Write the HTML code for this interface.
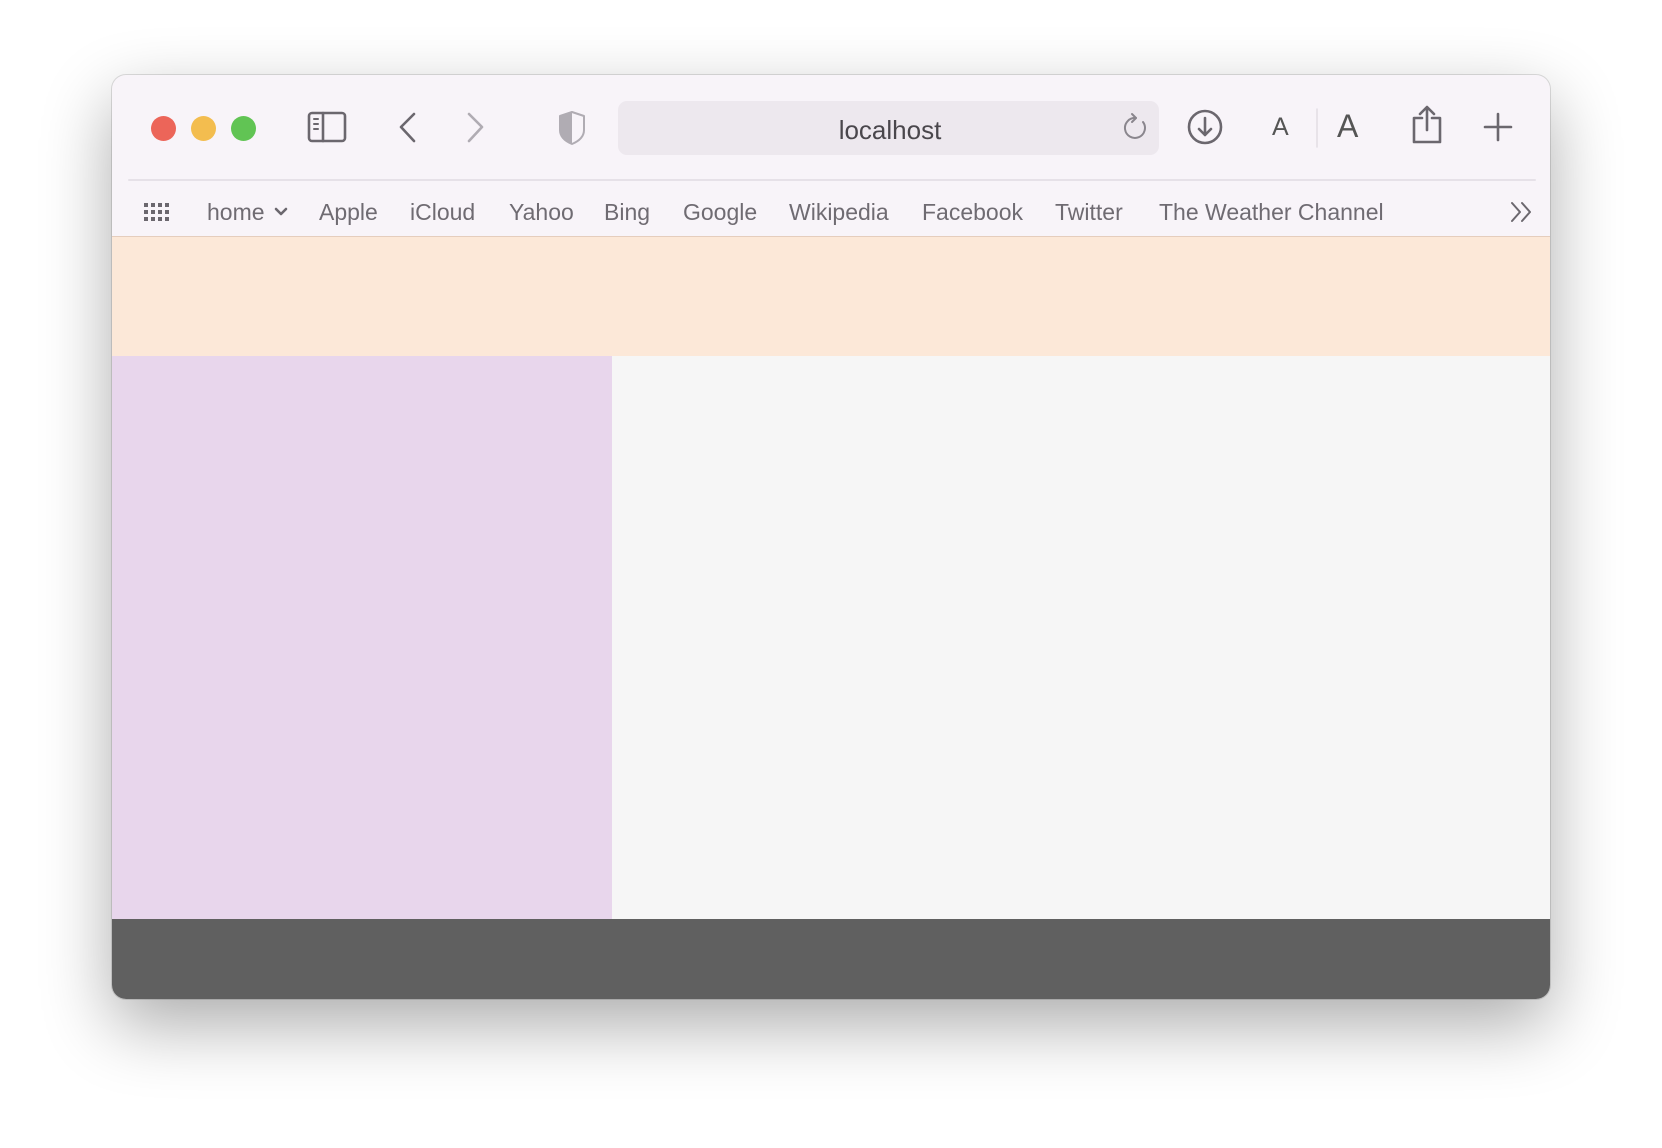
<!DOCTYPE html>
<html><head><style>
*{margin:0;padding:0;box-sizing:border-box}
body{width:1662px;height:1148px;background:#fff;position:relative;overflow:hidden;font-family:"Liberation Sans",sans-serif}
.win{position:absolute;left:112px;top:75px;width:1438px;height:924px;border-radius:14px;overflow:hidden;background:#f8f4f9;box-shadow:0 26px 70px rgba(0,0,0,.33),0 0 0 1px rgba(0,0,0,.12)}
.a{position:absolute}
.dot{position:absolute;top:116px;width:25px;height:25px;border-radius:50%}
.bm{position:absolute;top:199px;font-size:23px;color:#6f6b72;white-space:nowrap}
</style></head><body>
<div class="win"></div>
<div class="a" style="left:618px;top:101px;width:541px;height:54px;border-radius:9px;background:#ede8ee"></div>
<div class="dot" style="left:151px;background:#ec6559"></div>
<div class="dot" style="left:191px;background:#f3bd4f"></div>
<div class="dot" style="left:231px;background:#61c454"></div>
<svg class="a" style="left:0;top:0" width="1662" height="260" fill="none" stroke="#6b676e" stroke-width="2.6" stroke-linecap="round" stroke-linejoin="round">
<rect x="309" y="113" width="36" height="28" rx="3"/><line x1="323" y1="113" x2="323" y2="141"/>
<line x1="314" y1="119" x2="318" y2="119" stroke-width="2"/><line x1="314" y1="124" x2="318" y2="124" stroke-width="2"/><line x1="314" y1="129" x2="318" y2="129" stroke-width="2"/>
<path d="M414 114 L401 127 L414 141"/>
<path d="M469 114 L482 127 L469 141" stroke="#b0acb3"/>
<path d="M572 112 L584 116 L584 130 Q584 139 572 144 Q560 139 560 130 L560 116 Z" stroke="#b0acb3" stroke-width="2"/>
<path d="M572 112 L560 116 L560 130 Q560 139 572 144 Z" fill="#b0acb3" stroke="none"/>
<path d="M1143 122 A10 10 0 1 1 1136 118" stroke="#8a868d" stroke-width="2"/><path d="M1132 114 L1136 118 L1132 122" stroke="#8a868d" stroke-width="2"/>
<circle cx="1205" cy="127" r="16"/><path d="M1205 118 L1205 135 M1199 129 L1205 135 L1211 129"/>
<line x1="1317" y1="109" x2="1317" y2="147" stroke="#e2dde4" stroke-width="1.5"/>
<path d="M1427 108 L1427 130 M1420 114 L1427 107 L1434 114 M1422 118 L1414 118 L1414 142 L1440 142 L1440 118 L1432 118"/>
<path d="M1498 114 L1498 140 M1485 127 L1511 127"/>
<line x1="129" y1="180" x2="1535" y2="180" stroke="#e6e1e8" stroke-width="2"/>
<path d="M1512 203 L1520 212 L1512 221 M1522 203 L1530 212 L1522 221" stroke-width="2"/>
<path d="M276 209 L281 214 L286 209" stroke-width="2.6"/>
<g fill="#6b676e" stroke="none">
<rect x="144" y="203" width="4" height="4"/><rect x="151" y="203" width="4" height="4"/><rect x="158" y="203" width="4" height="4"/><rect x="165" y="203" width="4" height="4"/>
<rect x="144" y="210" width="4" height="4"/><rect x="151" y="210" width="4" height="4"/><rect x="158" y="210" width="4" height="4"/><rect x="165" y="210" width="4" height="4"/>
<rect x="144" y="217" width="4" height="4"/><rect x="151" y="217" width="4" height="4"/><rect x="158" y="217" width="4" height="4"/><rect x="165" y="217" width="4" height="4"/>
</g>
</svg>
<div class="a" style="left:618px;top:115px;width:544px;text-align:center;font-size:26px;color:#4a474c">localhost</div>
<div class="a" style="left:1272px;top:113px;font-size:25px;color:#555">A</div>
<div class="a" style="left:1337px;top:108px;font-size:32px;color:#555">A</div>
<div class="bm" style="left:207px">home</div>
<div class="bm" style="left:319px">Apple</div>
<div class="bm" style="left:410px">iCloud</div>
<div class="bm" style="left:509px">Yahoo</div>
<div class="bm" style="left:604px">Bing</div>
<div class="bm" style="left:683px">Google</div>
<div class="bm" style="left:789px">Wikipedia</div>
<div class="bm" style="left:922px">Facebook</div>
<div class="bm" style="left:1055px">Twitter</div>
<div class="bm" style="left:1159px">The Weather Channel</div>
<div class="a" style="left:112px;top:236px;width:1438px;height:1px;background:#e5cdbd"></div>
<div class="a" style="left:112px;top:237px;width:1438px;height:119px;background:#fce8d8"></div>
<div class="a" style="left:112px;top:356px;width:500px;height:563px;background:#e8d6ec"></div>
<div class="a" style="left:612px;top:356px;width:938px;height:563px;background:#f6f6f6"></div>
<div class="a" style="left:112px;top:919px;width:1438px;height:80px;background:#606060;border-radius:0 0 14px 14px"></div>
</body></html>
